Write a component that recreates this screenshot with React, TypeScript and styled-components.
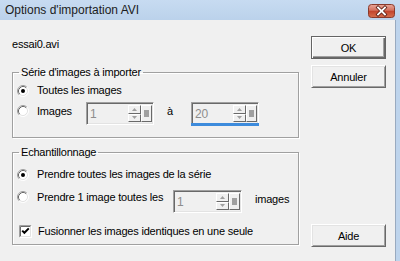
import styled, { createGlobalStyle } from 'styled-components'

const GlobalStyle = createGlobalStyle`
  html, body {
    margin: 0;
    padding: 0;
  }
  body {
    width: 400px;
    height: 261px;
    overflow: hidden;
    background: #bed4ec;
    font-family: "Liberation Sans", Arial, sans-serif;
    font-size: 11px;
    letter-spacing: -0.2px;
    color: #000;
  }
`

function CloseGlyph() {
  return (
    <svg width="27" height="14" viewBox="0 0 27 14">
      <defs>
        <linearGradient id="closeBg" x1="0" y1="0" x2="0" y2="1">
          <stop offset="0" stopColor="#e9a99c" />
          <stop offset="0.45" stopColor="#d3715e" />
          <stop offset="0.5" stopColor="#c2432c" />
          <stop offset="1" stopColor="#d6704f" />
        </linearGradient>
      </defs>
      <rect x="0.5" y="0.5" width="26" height="13" rx="3" fill="url(#closeBg)" stroke="#8a3a2b" />
      <path d="M10 3.5 L17 10.5 M17 3.5 L10 10.5" stroke="#5a1d14" strokeWidth="3.4" strokeLinecap="square" />
      <path d="M10 3.5 L17 10.5 M17 3.5 L10 10.5" stroke="#ffffff" strokeWidth="1.8" strokeLinecap="square" />
    </svg>
  )
}

function RadioGlyph({ checked }: { checked?: boolean }) {
  return (
    <svg width="12" height="12" viewBox="0 0 12 12">
      <circle cx="6" cy="6" r="5" fill="#ffffff" />
      <path d="M2.11 9.89 A5.5 5.5 0 0 1 9.89 2.11" fill="none" stroke="#a0a0a0" />
      <path d="M9.89 2.11 A5.5 5.5 0 0 1 2.11 9.89" fill="none" stroke="#ffffff" />
      <path d="M2.82 9.18 A4.5 4.5 0 0 1 9.18 2.82" fill="none" stroke="#696969" />
      <path d="M9.18 2.82 A4.5 4.5 0 0 1 2.82 9.18" fill="none" stroke="#e3e3e3" />
      {checked && <circle cx="6" cy="6" r="2" fill="#000" />}
    </svg>
  )
}

function CheckGlyph() {
  return (
    <svg width="13" height="13" viewBox="0 0 13 13">
      <rect x="0" y="0" width="13" height="13" fill="#ffffff" />
      <path d="M0.5 12.5 V0.5 H12.5" fill="none" stroke="#a0a0a0" />
      <path d="M1.5 11.5 V1.5 H11.5" fill="none" stroke="#696969" />
      <path d="M0.5 12.5 H12.5 V0.5" fill="none" stroke="#ffffff" />
      <path d="M1.5 11.5 H11.5 V1.5" fill="none" stroke="#e3e3e3" />
      <path d="M3.2 5.6 L5.4 7.8 L9.8 3.4" fill="none" stroke="#000" strokeWidth="2" />
    </svg>
  )
}

function ArrowGlyph({ down }: { down?: boolean }) {
  return (
    <svg width="5" height="3" viewBox="0 0 5 3">
      <path d={down ? 'M0 0 H5 L2.5 3 Z' : 'M0 3 H5 L2.5 0 Z'} fill="#a0a0a0" />
    </svg>
  )
}

function SpinBox({ value, $underline }: { value: string; $underline?: boolean }) {
  return (
    <SpinWrap>
      <SpinField>
        <SpinValue>{value}</SpinValue>
        <SpinArrows>
          <SpinArrow>
            <ArrowGlyph />
          </SpinArrow>
          <SpinArrow>
            <ArrowGlyph down />
          </SpinArrow>
        </SpinArrows>
        <SpinStop>
          <StopMark />
        </SpinStop>
      </SpinField>
      {$underline && <Underline />}
    </SpinWrap>
  )
}

export default function App() {
  return (
    <>
      <GlobalStyle />
      <Window>
        <TitleBar>
          <Title>Options d'importation AVI</Title>
          <CloseButton>
            <CloseGlyph />
          </CloseButton>
        </TitleBar>
        <Body>
          <LeftColumn>
            <FileName>essai0.avi</FileName>

            <Group $gap={11}>
              <Legend>Série d'images à importer</Legend>
              <RadioRow $top={5}>
                <RadioGlyph checked />
                <span>Toutes les images</span>
              </RadioRow>
              <SpinLine $cols="69px 68px 37px 68px" $top={5}>
                <RadioRow $top={2.5}>
                  <RadioGlyph />
                  <span>Images</span>
                </RadioRow>
                <SpinBox value="1" />
                <Connector>à</Connector>
                <SpinBox value="20" $underline />
              </SpinLine>
            </Group>

            <Group $gap={6} $top={8}>
              <Legend>Echantillonnage</Legend>
              <RadioRow $top={9}>
                <RadioGlyph checked />
                <span>Prendre toutes les images de la série</span>
              </RadioRow>
              <SpinLine $cols="156px 69px 82px" $top={9}>
                <RadioRow $top={0.5}>
                  <RadioGlyph />
                  <span>Prendre 1 image toutes les</span>
                </RadioRow>
                <SpinBox value="1" />
                <Connector $top={0}>images</Connector>
              </SpinLine>
              <CheckRow>
                <CheckGlyph />
                <span>Fusionner les images identiques en une seule</span>
              </CheckRow>
            </Group>
          </LeftColumn>

          <ButtonColumn>
            <DialogButton $default>OK</DialogButton>
            <DialogButton>Annuler</DialogButton>
            <DialogButton $push>Aide</DialogButton>
          </ButtonColumn>
        </Body>
      </Window>
    </>
  )
}

const Window = styled.div`
  display: flex;
  flex-direction: column;
  width: 400px;
  height: 261px;
  background: #bed4ec;
`

const TitleBar = styled.div`
  display: flex;
  align-items: center;
  justify-content: space-between;
  height: 20px;
  padding: 0 5px;
  background: linear-gradient(#c7dbf1, #bbd2eb);
`

const Title = styled.div`
  font-size: 12px;
  letter-spacing: 0;
  color: #1c1c1c;
`

const CloseButton = styled.div`
  display: flex;
  height: 14px;
  margin-top: 1px;
`

const Body = styled.div`
  flex: 1;
  display: grid;
  grid-template-columns: 287px 75px;
  column-gap: 12px;
  width: 396px;
  box-sizing: border-box;
  padding: 16px 0 14px 12px;
  background: #f0f0f0;
  border-right: 1px solid #99aabf;
`

const LeftColumn = styled.div`
  display: flex;
  flex-direction: column;
`

const FileName = styled.div`
  margin-top: 2px;
  line-height: 13px;
`

const Group = styled.fieldset<{ $gap: number; $top?: number }>`
  margin: ${p => p.$top ?? 15}px 0 0;
  padding: 0 0 ${p => p.$gap}px 4px;
  min-width: 0;
  border: 1px solid #a0a0a0;
  border-radius: 0;
  box-shadow: inset 1px 1px 0 #ffffff, 1px 1px 0 #ffffff;
`

const Legend = styled.legend`
  margin-left: 2px;
  padding: 0 2px;
  line-height: 13px;
`

const RadioRow = styled.div<{ $top?: number }>`
  display: flex;
  align-items: center;
  gap: 8px;
  height: 13px;
  margin-top: ${p => p.$top ?? 0}px;
  line-height: 13px;
  white-space: nowrap;
`

const CheckRow = styled.div`
  display: flex;
  align-items: center;
  gap: 6px;
  height: 13px;
  margin: 12px 0 0 2px;
  line-height: 13px;
  white-space: nowrap;
`

const SpinLine = styled.div<{ $cols: string; $top: number }>`
  display: grid;
  grid-template-columns: ${p => p.$cols};
  align-items: start;
  margin-top: ${p => p.$top}px;
`

const Connector = styled.div<{ $top?: number }>`
  padding: ${p => 3 + (p.$top ?? 0)}px 0 0 13px;
  line-height: 13px;
`

const SpinWrap = styled.div`
  display: flex;
  flex-direction: column;
`

const SpinField = styled.div`
  display: flex;
  height: 23px;
  box-sizing: border-box;
  border: 1px solid;
  border-color: #a0a0a0 #ffffff #ffffff #a0a0a0;
  box-shadow: inset 1px 1px 0 #696969, inset -1px -1px 0 #e3e3e3;
  padding: 2px 1px 2px 2px;
  background: #f0f0f0;
`

const SpinValue = styled.div`
  flex: 1;
  padding: 1px 0 0 1px;
  color: #8d8d8d;
  font-size: 12px;
  line-height: 16px;
`

const SpinArrows = styled.div`
  display: flex;
  flex-direction: column;
  width: 13px;
`

const SpinArrow = styled.div`
  flex: 1;
  display: flex;
  align-items: center;
  justify-content: center;
  box-sizing: border-box;
  border: 1px solid;
  border-color: #ffffff #696969 #696969 #ffffff;
  background: #f0f0f0;
`

const SpinStop = styled.div`
  display: flex;
  align-items: center;
  justify-content: center;
  width: 11px;
  box-sizing: border-box;
  border: 1px solid;
  border-color: #ffffff #696969 #696969 #ffffff;
  background: #f0f0f0;
`

const StopMark = styled.div`
  width: 5px;
  height: 7px;
  background: #a0a0a0;
`

const Underline = styled.div`
  height: 3px;
  margin-top: -2px;
  background: #3d8bdc;
`

const ButtonColumn = styled.div`
  display: flex;
  flex-direction: column;
  gap: 6px;
`

const DialogButton = styled.button<{ $default?: boolean; $push?: boolean }>`
  height: 23px;
  width: 75px;
  margin-top: ${p => (p.$push ? 'auto' : '0')};
  padding: 0;
  font-family: "Liberation Sans", Arial, sans-serif;
  font-size: 11px;
  letter-spacing: -0.2px;
  color: #000;
  background: #f0f0f0;
  border: 1px solid;
  border-color: ${p => (p.$default ? '#646464' : '#ffffff #696969 #696969 #ffffff')};
  box-shadow: ${p =>
    p.$default
      ? 'inset 1px 1px 0 #ffffff, inset -1px -1px 0 #696969, inset -2px -2px 0 #a0a0a0'
      : 'inset 1px 1px 0 #e3e3e3, inset -1px -1px 0 #a0a0a0'};
  border-radius: 0;
`
